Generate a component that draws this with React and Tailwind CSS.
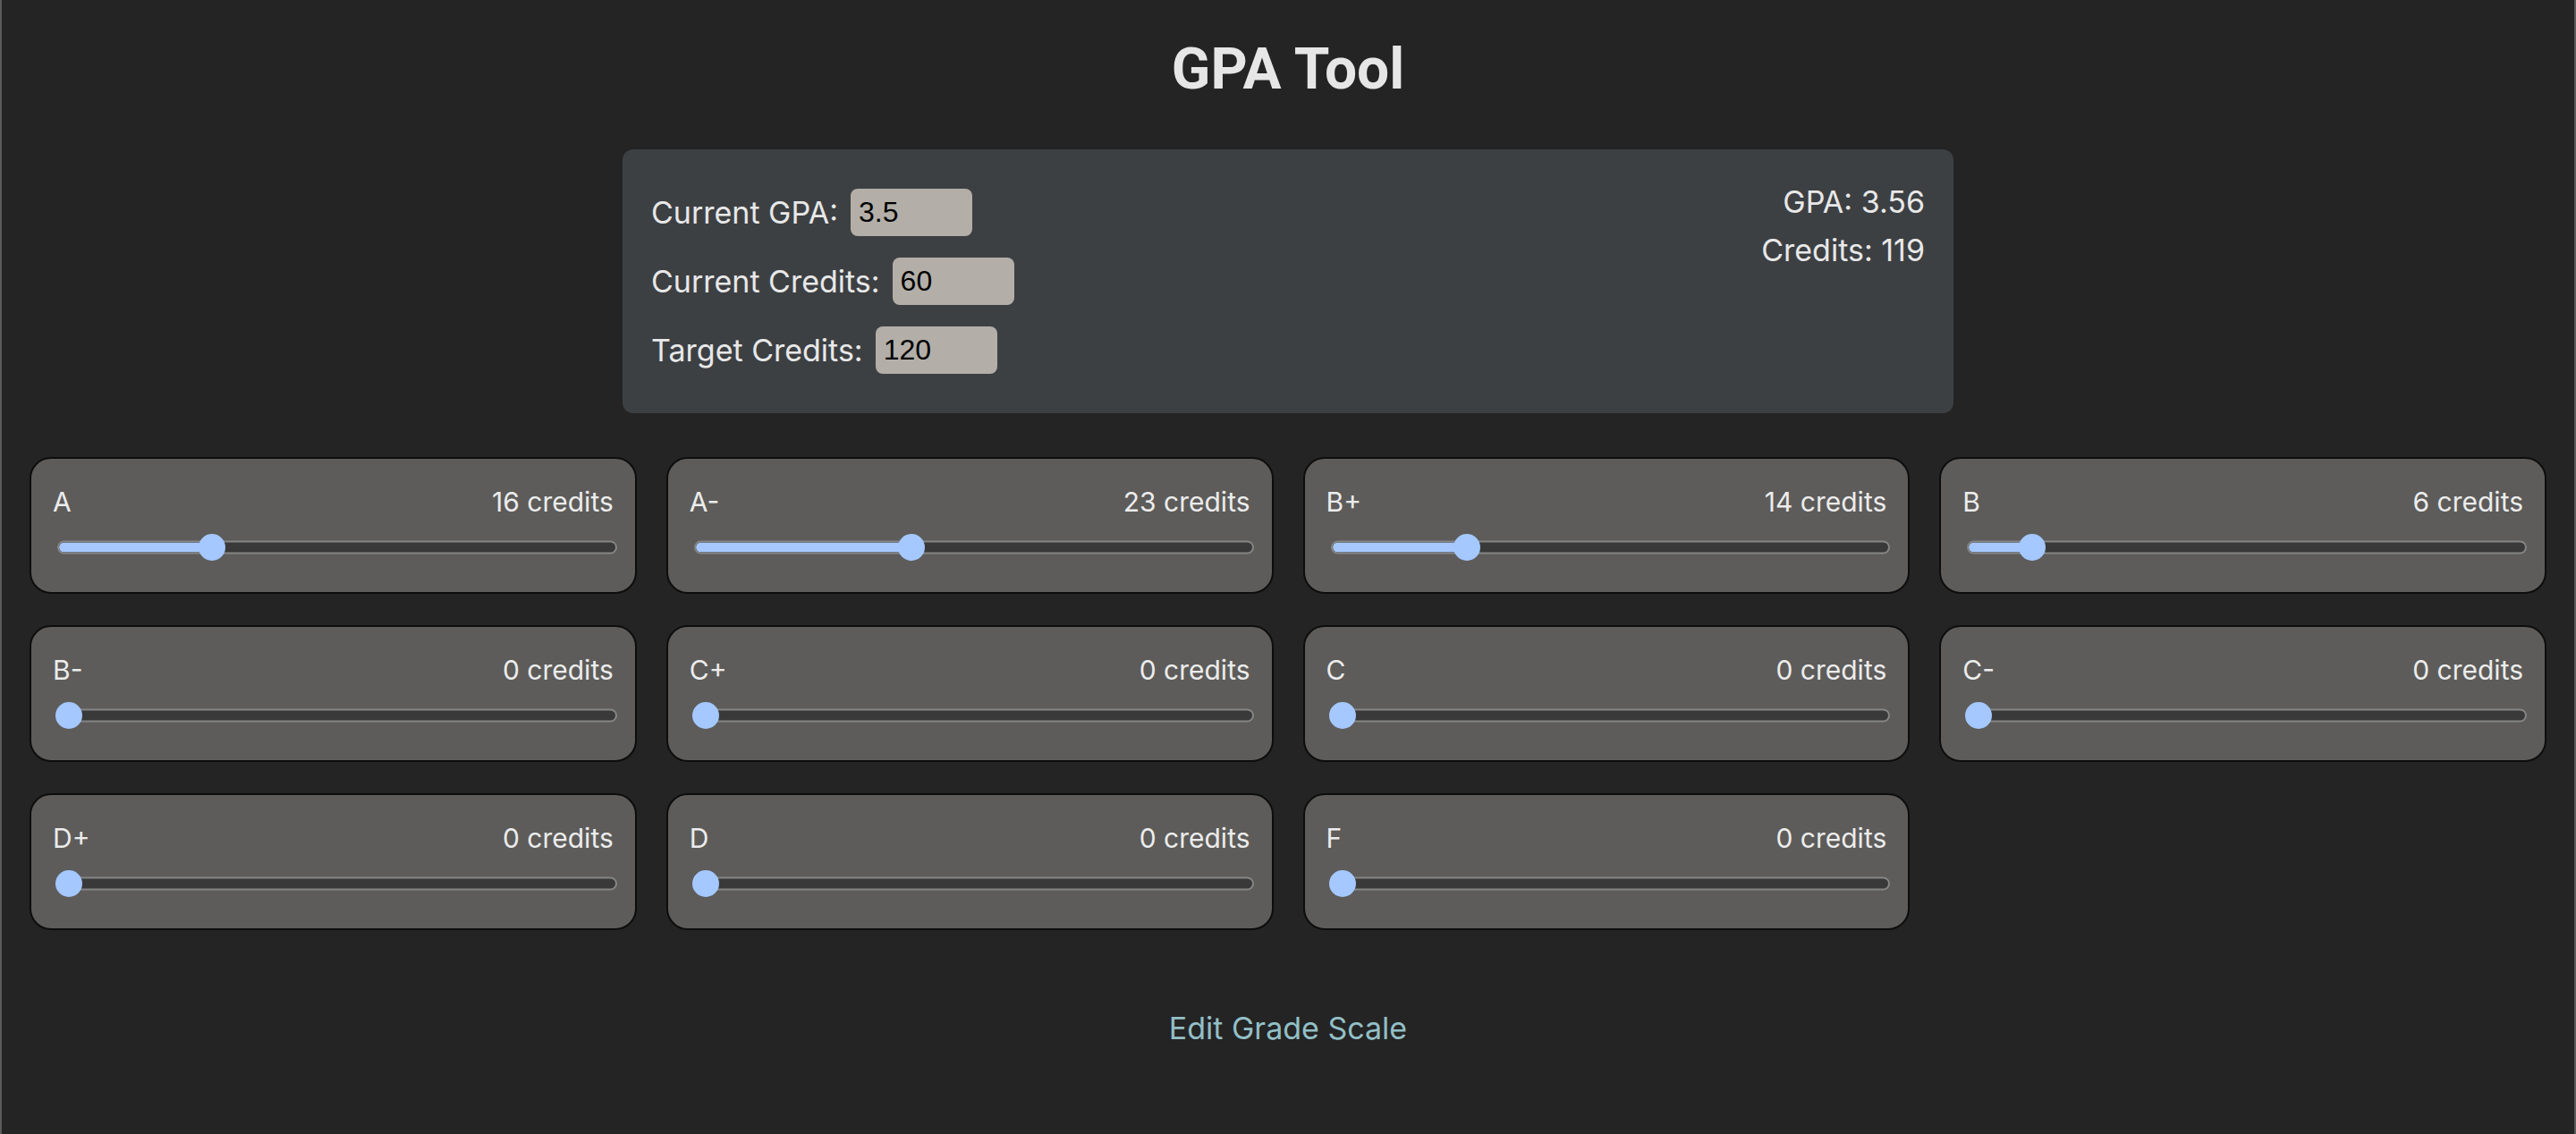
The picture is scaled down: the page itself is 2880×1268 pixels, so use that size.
const grades = [
  { label: "A", credits: 16 },
  { label: "A-", credits: 23 },
  { label: "B+", credits: 14 },
  { label: "B", credits: 6 },
  { label: "B-", credits: 0 },
  { label: "C+", credits: 0 },
  { label: "C", credits: 0 },
  { label: "C-", credits: 0 },
  { label: "D+", credits: 0 },
  { label: "D", credits: 0 },
  { label: "F", credits: 0 },
];

const MAX = 60;

function Field({ label, value }) {
  return (
    <div className="flex items-center h-[53px]">
      <span>{label}</span>
      <input
        readOnly
        value={value}
        className="ml-[14px] w-[136px] h-[53px] rounded-[8px] bg-[#b3afa8] text-black pl-[9px] text-[32px] font-['Liberation_Sans',sans-serif] outline-none border-0"
      />
    </div>
  );
}

function Slider({ value }) {
  const pct = value / MAX;
  const pos = `calc(13px + ${pct} * (100% - 26px))`;
  return (
    <div className="relative h-[30px] mt-[18px] ml-[5px] mr-[-4px]">
      <div className="absolute inset-x-0 top-1/2 -translate-y-1/2 h-[15px] rounded-full border-2 border-[#858585] bg-[#393939] overflow-hidden">
        <div className="h-full bg-[#a6c8ff] rounded-full" style={{ width: pos }} />
      </div>
      <div
        className="absolute top-0 w-[30px] h-[30px] -translate-x-1/2 rounded-full bg-[#a4c8ff]"
        style={{ left: pos }}
      />
    </div>
  );
}

function GradeCard({ label, credits }) {
  return (
    <div className="rounded-[24px] border-2 border-[#0d0d0d] bg-[#5d5c5a] px-[24px] pt-[30px] pb-[35px]">
      <div className="flex justify-between text-[30px] leading-[36px] text-[#ececec]">
        <span>{label}</span>
        <span>{credits} credits</span>
      </div>
      <Slider value={credits} />
    </div>
  );
}

export default function App() {
  return (
    <div className="min-h-screen bg-[#242424] border-x-2 border-[#5b5b5b] font-['Inter',sans-serif] text-[#e8e8e8]">
      <h1 className="pt-[41px] text-center font-['Roboto',sans-serif] font-bold text-[64px] leading-[74px] text-[#e6e6e6]">
        GPA Tool
      </h1>

      <div className="mx-auto mt-[52px] w-[1488px] rounded-[12px] bg-[#3d4043] p-[32px] flex justify-between text-[34px]">
        <div className="flex flex-col gap-[24px] py-[12px]">
          <Field label="Current GPA:" value="3.5" />
          <Field label="Current Credits:" value="60" />
          <Field label="Target Credits:" value="120" />
        </div>
        <div className="text-right leading-[54px]">
          <p>GPA: 3.56</p>
          <p>Credits: 119</p>
        </div>
      </div>

      <div className="mt-[49px] px-[31px] grid grid-cols-4 gap-x-[33px] gap-y-[35px]">
        {grades.map((g) => (
          <GradeCard key={g.label} label={g.label} credits={g.credits} />
        ))}
      </div>

      <p className="mt-[84px] text-center text-[34px] text-[#93bfc6]">Edit Grade Scale</p>
    </div>
  );
}
